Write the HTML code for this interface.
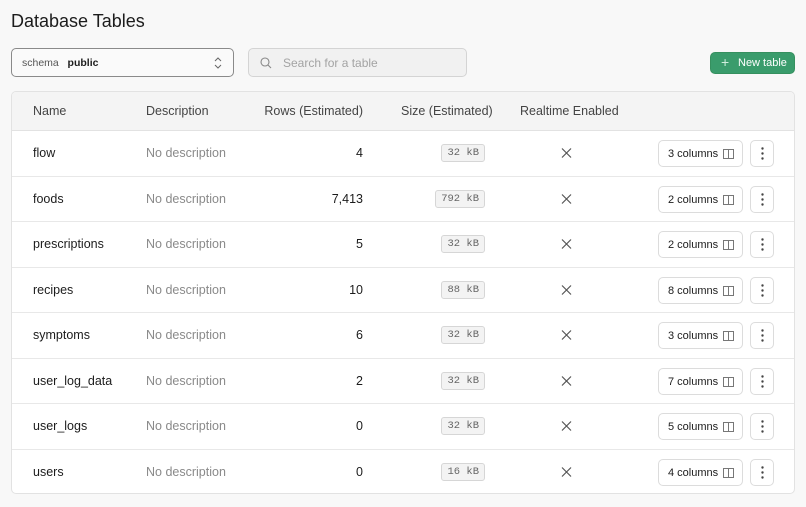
<!DOCTYPE html>
<html><head><style>
*{box-sizing:border-box;margin:0;padding:0}
body{width:806px;height:507px;background:#f8f8f8;font-family:"Liberation Sans",sans-serif;color:#1c1c1c;position:relative;overflow:hidden;font-size:12.5px}
.abs{position:absolute}
h1{position:absolute;left:11px;top:11px;font-size:18px;font-weight:400;color:#1c1c1c}
.sel{left:11px;top:48px;width:223px;height:29px;border:1px solid #8a8a8a;border-radius:5px;background:#fafafa;font-size:10.5px;line-height:28px;padding-left:10px}
.srch{left:248px;top:48px;width:219px;height:29px;border:1px solid #d4d4d4;border-radius:5px;background:#f1f1f1;color:#a3a3a3;font-size:12px;line-height:28px;padding-left:34px}
.btn{left:710px;top:52px;width:85px;height:22px;background:#3a9c6c;border:1px solid #36905f;border-radius:5px;color:#fff;font-size:11px;line-height:20px;padding-left:27px}
.tbl{left:11px;top:91px;width:784px;height:403px;border:1px solid #e2e2e2;border-radius:5px;background:#fff;overflow:hidden}
.hd{position:absolute;left:0;top:0;width:100%;height:39px;background:#f4f4f4;border-bottom:1px solid #e2e2e2;color:#444}
.row{position:absolute;left:0;width:100%;height:45.5px;border-bottom:1px solid #e8e8e8}
.c{position:absolute;top:50%;transform:translateY(-50%);white-space:nowrap}
.badge{border:1px solid #d6d6d6;background:#f3f3f3;border-radius:3px;font-family:"Liberation Mono",monospace;font-size:10.5px;color:#666;padding:2px 5px}
.cols{position:absolute;left:646px;top:9px;width:85px;height:27px;border:1px solid #dcdcdc;border-radius:5px;font-size:11px;line-height:26px;padding-left:9px;background:#fff}
.dots{position:absolute;left:738px;top:9px;width:24px;height:27px;border:1px solid #dcdcdc;border-radius:5px;background:#fff}
</style></head><body>
<h1>Database Tables</h1>
<div class="abs sel"><span style="color:#555">schema</span>&nbsp;&nbsp;&nbsp;<b style="font-weight:600">public</b>
<svg class="abs" style="left:202px;top:8px" width="8" height="12" viewBox="0 0 8 12"><path d="M1 4l3-3 3 3M1 8l3 3 3-3" fill="none" stroke="#666" stroke-width="1"/></svg></div>
<div class="abs srch">Search for a table
<svg class="abs" style="left:11px;top:8px" width="12" height="12" viewBox="0 0 12 12"><circle cx="5" cy="5" r="4" fill="none" stroke="#888" stroke-width="1.1"/><path d="M8 8l3 3" stroke="#888" stroke-width="1.1"/></svg></div>
<div class="abs btn"><span class="abs" style="left:10px;top:-1px;font-size:14px;color:#cfeedd">+</span>New table</div>
<div class="abs tbl">
<div class="hd"><span class="c" style="left:21px">Name</span><span class="c" style="left:134px">Description</span><span class="c" style="right:431px">Rows (Estimated)</span><span class="c" style="left:389px">Size (Estimated)</span><span class="c" style="left:508px">Realtime Enabled</span></div>
<div id="rows"></div>
</div>
<script>
var d=[["flow","4","32 kB",3],["foods","7,413","792 kB",2],["prescriptions","5","32 kB",2],["recipes","10","88 kB",8],["symptoms","6","32 kB",3],["user_log_data","2","32 kB",7],["user_logs","0","32 kB",5],["users","0","16 kB",4]];
var h="";d.forEach(function(r,i){h+='<div class="row" style="top:'+(39+i*45.5)+'px"><span class="c" style="left:21px">'+r[0]+'</span><span class="c" style="left:134px;color:#8a8a8a">No description</span><span class="c" style="right:431px">'+r[1]+'</span><span class="c badge" style="right:309px">'+r[2].replace(" ","&nbsp;")+'</span><svg class="c" style="left:549px" width="11" height="11" viewBox="0 0 11 11"><path d="M1 1l9 9M10 1l-9 9" stroke="#555" stroke-width="1.2"/></svg><div class="cols">'+r[3]+' columns<svg style="position:absolute;left:64px;top:8px" width="11" height="10" viewBox="0 0 11 10"><rect x=".5" y=".5" width="10" height="9" fill="none" stroke="#777"/><path d="M5.5 0v10" stroke="#777"/></svg></div><div class="dots"><svg style="position:absolute;left:10px;top:6px" width="3" height="13"><circle cx="1.5" cy="1.5" r="1.2" fill="#444"/><circle cx="1.5" cy="6.5" r="1.2" fill="#444"/><circle cx="1.5" cy="11.5" r="1.2" fill="#444"/></svg></div></div>'});
document.getElementById("rows").innerHTML=h;
</script>
</body></html>
